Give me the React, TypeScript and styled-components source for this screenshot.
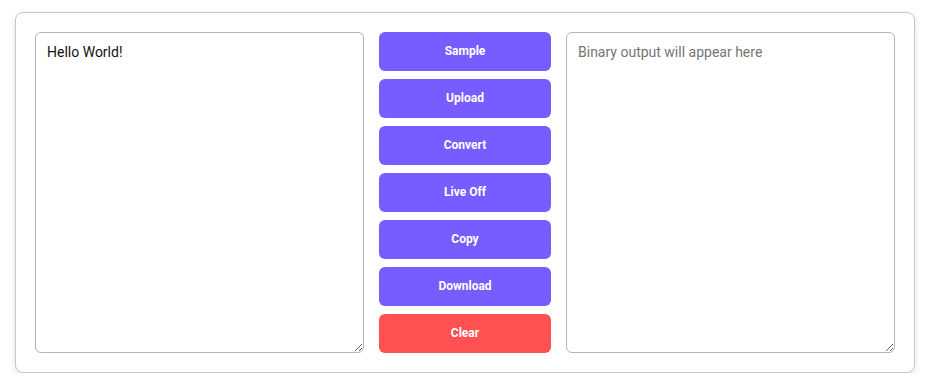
import { createGlobalStyle, styled } from 'styled-components';

const buttons = ['Sample', 'Upload', 'Convert', 'Live Off', 'Copy', 'Download'];

const GlobalStyle = createGlobalStyle`
  html, body {
    margin: 0;
    padding: 0;
    background: #fff;
    font-family: Roboto, "Liberation Sans", sans-serif;
  }
`;

export default function App() {
  return (
    <>
      <GlobalStyle />
      <Styled.Card>
        <Styled.TextArea defaultValue="Hello World!" />
        <Styled.Buttons>
          {buttons.map(label => (
            <Styled.Button key={label}>{label}</Styled.Button>
          ))}
          <Styled.Button $danger>Clear</Styled.Button>
        </Styled.Buttons>
        <Styled.TextArea placeholder="Binary output will appear here" readOnly />
      </Styled.Card>
    </>
  );
}

const Styled = {
  Card: styled.div`
    box-sizing: border-box;
    width: 900px;
    margin: 12px auto 0;
    padding: 19px;
    display: flex;
    gap: 15px;
    border: 1px solid #c8c8c8;
    border-radius: 8px;
    box-shadow: 0 2px 6px rgba(0, 0, 0, 0.12);
    background: #fff;
  `,
  TextArea: styled.textarea`
    box-sizing: border-box;
    width: 329px;
    height: 321px;
    padding: 10px 11px;
    border: 1px solid #b5b5b5;
    border-radius: 6px;
    font-family: Roboto, "Liberation Sans", sans-serif;
    font-size: 14px;
    line-height: 1.3;
    color: #111;
    outline: none;
    &::placeholder {
      color: #757575;
    }
  `,
  Buttons: styled.div`
    width: 172px;
    display: flex;
    flex-direction: column;
    gap: 8px;
  `,
  Button: styled.button<{ $danger?: boolean }>`
    height: 39px;
    padding: 0 0 2px;
    border: none;
    border-radius: 6px;
    background: ${p => (p.$danger ? '#ff5052' : '#775cff')};
    color: #fff;
    font-family: Roboto, "Liberation Sans", sans-serif;
    font-size: 12px;
    font-weight: 700;
    cursor: pointer;
  `,
};
